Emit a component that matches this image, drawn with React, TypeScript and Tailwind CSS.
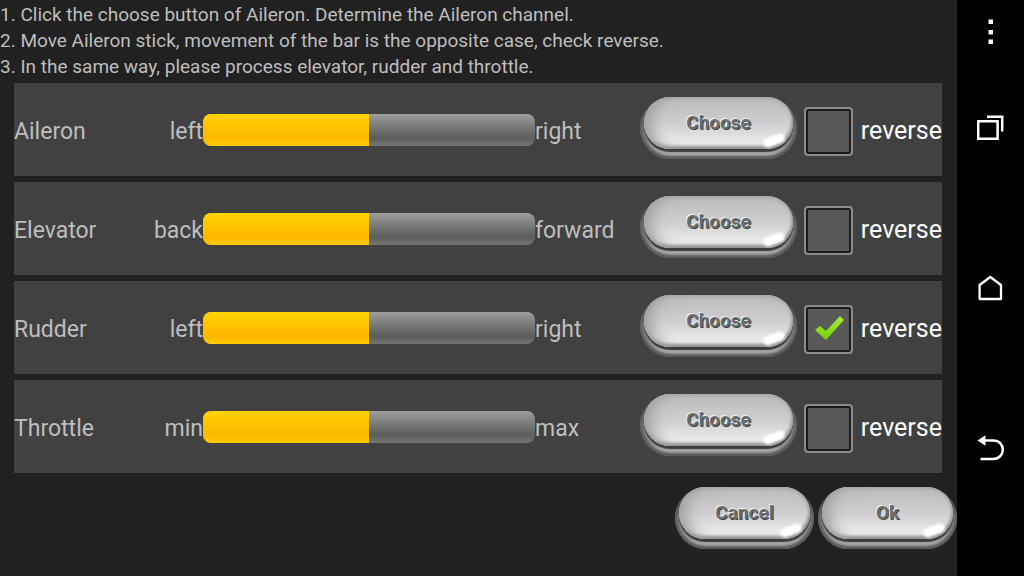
import { useState } from 'react';
import clsx from 'clsx';

interface Channel {
  id: string;
  name: string;
  low: string;
  high: string;
  value: number;
  reverse: boolean;
}

const initialChannels: Channel[] = [
  { id: 'aileron', name: 'Aileron', low: 'left', high: 'right', value: 50, reverse: false },
  { id: 'elevator', name: 'Elevator', low: 'back', high: 'forward', value: 50, reverse: false },
  { id: 'rudder', name: 'Rudder', low: 'left', high: 'right', value: 50, reverse: true },
  { id: 'throttle', name: 'Throttle', low: 'min', high: 'max', value: 50, reverse: false },
];

const steps = [
  '1. Click the choose button of Aileron. Determine the Aileron channel.',
  '2. Move Aileron stick, movement of the bar is the opposite case, check reverse.',
  '3. In the same way, please process elevator, rudder and throttle.',
];

interface PillButtonProps {
  label: string;
  className?: string;
}

// Metal pill: light outer rim, dark groove, glossy face
function PillButton({ label, className }: PillButtonProps) {
  return (
    <button
      type="button"
      className={clsx(
        'relative h-[62px] shrink-0 rounded-[31px] bg-linear-to-b from-transparent from-10% via-[#6e6e6e] via-40% to-[#a6a6a6] to-88% px-1 pb-[10px] shadow-[inset_0_-2px_2px_#5c5c5c,inset_2px_-2px_3px_#5c5c5c,inset_-2px_-2px_3px_#5c5c5c]',
        className
      )}
    >
      <span className="flex h-full items-center justify-center rounded-[27px] bg-linear-to-b from-[#bcbcbc] via-[#cfcdcf] via-50% to-[#ececec] to-88% text-[19px] leading-6 font-bold text-[#6a6d6a] shadow-[0_3px_1px_#3c3c3c,0_1px_1px_#5a5a5a,inset_14px_0_14px_-6px_#a4a4a4,inset_0_2px_3px_#a8a8a8,inset_-1px_-3px_3px_#8e8e8e] [text-shadow:-1px_-1px_0_#f2f2f2,1px_1px_0_#444444]">
        {label}
      </span>
      <span className="absolute right-3 bottom-[14px] h-[9px] w-[22px] -rotate-20 rounded-full bg-white blur-[1px]" />
    </button>
  );
}

function ChannelBar({ name, value }: { name: string; value: number }) {
  return (
    <div
      role="progressbar"
      aria-label={name}
      aria-valuenow={value}
      className="h-8 flex-1 overflow-hidden rounded-lg bg-linear-to-b from-[#9d9e9d] via-[#5a5d5a] via-75% to-[#747674]"
    >
      <div
        className="h-full bg-linear-to-b from-[#ffd300] via-[#ffb600] via-75% to-[#ffcb00]"
        style={{ width: `${value}%` }}
      />
    </div>
  );
}

interface ChannelRowProps {
  channel: Channel;
  onReverse: () => void;
}

function ChannelRow({ channel, onReverse }: ChannelRowProps) {
  return (
    <div className="flex h-[93px] items-center bg-[#414141] text-[23px] text-[#bebebe]">
      <div className="flex w-[189px] shrink-0 justify-between pt-[5px]">
        <span>{channel.name}</span>
        <span>{channel.low}</span>
      </div>
      <ChannelBar name={channel.name} value={channel.value} />
      <span className="w-[105px] shrink-0 pt-[5px]">{channel.high}</span>
      <PillButton label="Choose" className="mb-1 w-[157px]" />
      <label className="ml-[7px] flex w-[138px] shrink-0 items-center justify-between pt-[3px] text-[25px] text-white">
        <span className="relative size-[49px]">
          <input
            type="checkbox"
            checked={channel.reverse}
            onChange={onReverse}
            className="block size-full appearance-none rounded-sm border-2 border-[#8c8c8c] bg-[#585958] shadow-[inset_0_0_0_2px_#1c1c1c]"
          />
          {channel.reverse && (
            <svg viewBox="0 0 49 49" className="pointer-events-none absolute inset-0 size-full">
              <defs>
                <linearGradient id="tick" x1="0" y1="0" x2="0" y2="1">
                  <stop offset="0" stopColor="#a5ec35" />
                  <stop offset="1" stopColor="#79cf10" />
                </linearGradient>
              </defs>
              <path d="M11 25 L16 21 L22 26 L36 11 L40 15 L22 35 Z" fill="url(#tick)" />
            </svg>
          )}
        </span>
        <span>reverse</span>
      </label>
    </div>
  );
}

function NavBar() {
  return (
    <nav className="flex w-[67px] shrink-0 flex-col items-center bg-black text-white">
      <button type="button" aria-label="Menu" className="flex h-16 w-full items-center justify-center">
        <svg width="28" height="28" viewBox="0 0 28 28" fill="currentColor">
          <path d="M11.5 1.5h4.5v4.5h-4.5zM11.5 12h4.5v4.5h-4.5zM11.5 21.5h4.5v4.5h-4.5z" />
        </svg>
      </button>
      <button type="button" aria-label="Recent apps" className="flex h-32 w-full items-center justify-center">
        <svg width="28" height="28" viewBox="0 0 28 28" fill="none" stroke="currentColor" strokeWidth="2.5">
          <path d="M1.2 7.2h19.4v17.6H1.2z" />
          <path d="M10 2.7h15.2v14.8" />
        </svg>
      </button>
      <button type="button" aria-label="Home" className="flex h-48 w-full items-center justify-center">
        <svg width="28" height="28" viewBox="0 0 28 28" fill="none" stroke="currentColor" strokeWidth="2.3" strokeLinejoin="round">
          <path d="M13.3 3L24 11V25H2.6V11z" />
        </svg>
      </button>
      <button type="button" aria-label="Back" className="flex h-32 w-full items-center justify-center">
        <svg width="28" height="28" viewBox="0 0 28 28" fill="none" stroke="currentColor" strokeWidth="2.5">
          <path d="M7.5 6.5H16.5C22 6.5 25.8 10.5 25.8 15.5S22 25 16.5 25H3.5" />
          <path d="M0.5 6.5L8.5 1.3V11.7z" fill="currentColor" stroke="none" />
        </svg>
      </button>
    </nav>
  );
}

export default function App() {
  const [channels, setChannels] = useState(initialChannels);

  const toggleReverse = (id: string) => {
    setChannels(channels.map((c) => (c.id === id ? { ...c, reverse: !c.reverse } : c)));
  };

  return (
    <div className="flex min-h-screen bg-[#212121] font-['Roboto',sans-serif]">
      <main className="flex-1">
        <div className="pt-[2px] text-[19px] leading-[26px] text-[#bebebe]">
          {steps.map((step) => (
            <p key={step}>{step}</p>
          ))}
        </div>

        <div className="mt-[3px] mr-[15px] ml-[14px] space-y-[6px]">
          {channels.map((channel) => (
            <ChannelRow key={channel.id} channel={channel} onReverse={() => toggleReverse(channel.id)} />
          ))}
        </div>

        <div className="mt-[14px] flex justify-end gap-1">
          <PillButton label="Cancel" className="w-[139px]" />
          <PillButton label="Ok" className="w-[139px]" />
        </div>
      </main>
      <NavBar />
    </div>
  );
}
